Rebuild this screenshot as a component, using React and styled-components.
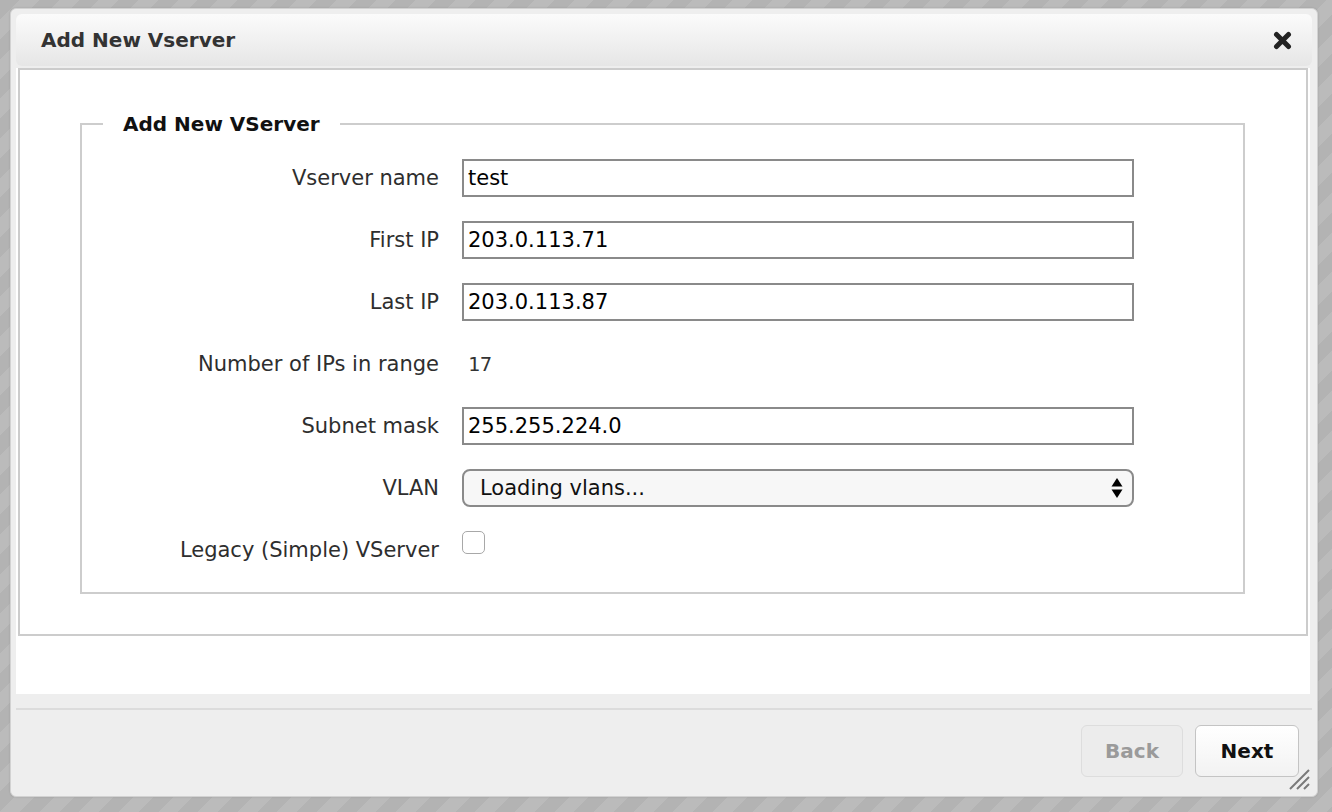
import React from 'react'
import styled, { createGlobalStyle } from 'styled-components'

const GlobalStyle = createGlobalStyle`
  html, body {
    margin: 0;
    padding: 0;
  }
  body {
    width: 1332px;
    height: 812px;
    overflow: hidden;
    font-family: "DejaVu Sans", Verdana, sans-serif;
    background: repeating-linear-gradient(
      135deg,
      #b3b3b3 0px,
      #b3b3b3 14px,
      #bbbbbb 14px,
      #bbbbbb 28px
    );
  }
`

const Dialog = styled.div`
  position: relative;
  box-sizing: border-box;
  margin: 8px 0 0 10px;
  width: 1308px;
  height: 789px;
  padding: 5px;
  background: #eeeeee;
  border: 1px solid #d2d2d2;
  border-radius: 6px;
  box-shadow: 0 0 2px rgba(0, 0, 0, 0.15);
  display: flex;
  flex-direction: column;
`

const Header = styled.div`
  box-sizing: border-box;
  height: 52px;
  padding: 0 20px 0 25px;
  display: flex;
  align-items: center;
  justify-content: space-between;
  background: linear-gradient(#fbfbfb, #e6e6e6);
  border-radius: 6px;
`

const Title = styled.span`
  font-size: 20px;
  font-weight: bold;
  color: #333;
`

const CloseButton = styled.span`
  display: flex;
  width: 19px;
  height: 19px;
  cursor: pointer;
`

const Body = styled.div`
  box-sizing: border-box;
  margin: 2px 2px 0 0;
  height: 626px;
  padding: 0 2px;
  background: #fff;
`

const Panel = styled.div`
  border: 2px solid #cccccc;
  padding: 42px 61px 40px 60px;
`

const Fieldset = styled.fieldset`
  margin: 0;
  padding: 0 0 23px 0;
  border: 2px solid #cdcdcd;
  min-width: 0;
`

const Legend = styled.legend`
  margin-left: 21px;
  padding: 0 20px;
  font-size: 20px;
  line-height: 24px;
  font-weight: bold;
  color: #111;
`

const FormGrid = styled.div`
  display: grid;
  grid-template-columns: 357px 672px;
  grid-auto-rows: 38px;
  column-gap: 23px;
  row-gap: 24px;
  padding-top: 23px;
`

const Label = styled.label`
  display: flex;
  align-items: center;
  justify-content: flex-end;
  font-size: 21px;
  color: #2e2e2e;
  white-space: nowrap;
`

const TextInput = styled.input`
  box-sizing: border-box;
  width: 672px;
  height: 38px;
  margin: 0;
  padding: 0 4px;
  border: 2px solid #8a8a8a;
  border-radius: 0;
  font-family: "DejaVu Sans", Verdana, sans-serif;
  font-size: 21px;
  color: #000;
  background: #fff;
  outline: none;
`

const Value = styled.span`
  display: flex;
  align-items: center;
  padding-left: 6px;
  font-family: "DejaVu Sans Mono", "Liberation Mono", monospace;
  font-size: 20px;
  color: #333;
`

const SelectBox = styled.div`
  box-sizing: border-box;
  height: 38px;
  padding: 0 9px 0 16px;
  display: flex;
  align-items: center;
  justify-content: space-between;
  border: 2px solid #8a8a8a;
  border-radius: 8px;
  background: #f7f7f7;
  font-size: 21px;
  color: #111;
`

const CheckCell = styled.div`
  display: flex;
  align-items: flex-start;
`

const Checkbox = styled.span`
  box-sizing: border-box;
  width: 23px;
  height: 23px;
  border: 1px solid #a8a8a8;
  border-radius: 5px;
  background: #fff;
`

const Footer = styled.div`
  flex: 1;
  display: flex;
  flex-direction: column;
  padding-top: 14px;
`

const Separator = styled.div`
  height: 2px;
  background: #dcdcdc;
`

const ButtonRow = styled.div`
  display: flex;
  justify-content: flex-end;
  gap: 12px;
  padding: 15px 13px 0 0;
`

const Button = styled.button`
  box-sizing: border-box;
  height: 52px;
  min-width: ${p => (p.$wide ? 104 : 102)}px;
  padding: 0 22px;
  font-family: "DejaVu Sans", Verdana, sans-serif;
  font-size: 20px;
  font-weight: bold;
  border-radius: 6px;
  color: ${p => (p.disabled ? '#9a9a9a' : '#111')};
  border: 1px solid ${p => (p.disabled ? '#dddddd' : '#c4c4c4')};
  background: ${p => (p.disabled ? '#ececec' : 'linear-gradient(#ffffff, #f2f2f2)')};
`

const Grip = styled.svg`
  position: absolute;
  right: 7px;
  bottom: 6px;
`

const rows = [
  { label: 'Vserver name', value: 'test' },
  { label: 'First IP', value: '203.0.113.71' },
  { label: 'Last IP', value: '203.0.113.87' },
]

function Arrows() {
  return (
    <svg width="12" height="22" viewBox="0 0 12 22">
      <path d="M6 1 L11.5 9.5 L0.5 9.5 Z" fill="#000" />
      <path d="M6 21 L11.5 12.5 L0.5 12.5 Z" fill="#000" />
    </svg>
  )
}

export default function App() {
  return (
    <>
      <GlobalStyle />
      <Dialog>
        <Header>
          <Title>Add New Vserver</Title>
          <CloseButton>
            <svg width="19" height="19" viewBox="0 0 19 19">
              <path d="M3.5 3.5 L15.5 15.5 M15.5 3.5 L3.5 15.5" stroke="#222" strokeWidth="5" strokeLinecap="round" />
            </svg>
          </CloseButton>
        </Header>
        <Body>
          <Panel>
            <Fieldset>
              <Legend>Add New VServer</Legend>
              <FormGrid>
                {rows.map(r => (
                  <React.Fragment key={r.label}>
                    <Label>{r.label}</Label>
                    <TextInput defaultValue={r.value} />
                  </React.Fragment>
                ))}
                <Label>Number of IPs in range</Label>
                <Value>17</Value>
                <Label>Subnet mask</Label>
                <TextInput defaultValue="255.255.224.0" />
                <Label>VLAN</Label>
                <SelectBox>
                  <span>Loading vlans...</span>
                  <Arrows />
                </SelectBox>
                <Label>Legacy (Simple) VServer</Label>
                <CheckCell>
                  <Checkbox />
                </CheckCell>
              </FormGrid>
            </Fieldset>
          </Panel>
        </Body>
        <Footer>
          <Separator />
          <ButtonRow>
            <Button disabled>Back</Button>
            <Button $wide>Next</Button>
          </ButtonRow>
        </Footer>
        <Grip width="22" height="22" viewBox="0 0 22 22">
          <path d="M2 21 L21 2 M9 21 L21 9 M16 21 L21 16" stroke="#7a7a7a" strokeWidth="2" />
        </Grip>
      </Dialog>
    </>
  )
}
